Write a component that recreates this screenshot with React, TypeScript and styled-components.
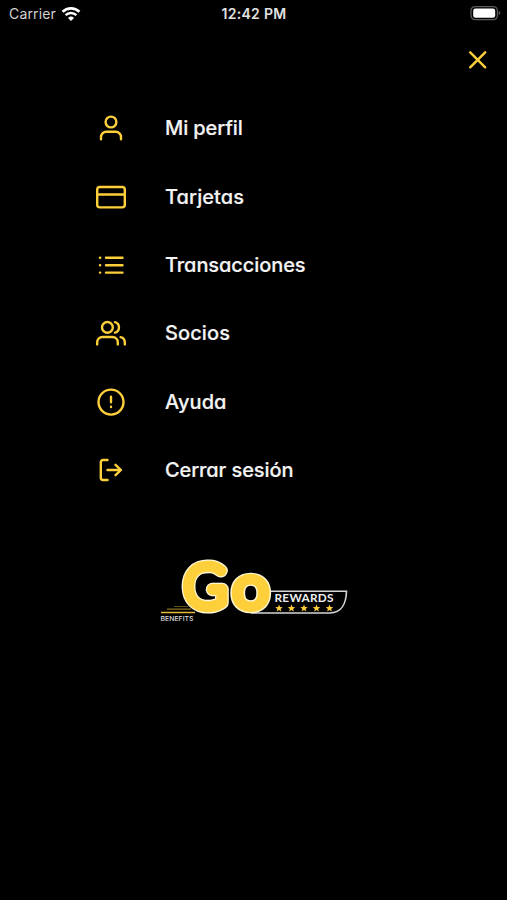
import React from "react";
import styled, { createGlobalStyle } from "styled-components";

const GlobalStyle = createGlobalStyle`
  * { box-sizing: border-box; }
  body { margin: 0; background: #000; }
`;

const yellow = "#fdcf3b";

const Screen = styled.div`
  display: flex;
  flex-direction: column;
  width: 507px;
  height: 900px;
  overflow: hidden;
  background: #000;
  color: #f4f4f4;
  font-family: Inter, "Liberation Sans", sans-serif;
`;

const StatusBar = styled.header`
  display: grid;
  grid-template-columns: 1fr auto 1fr;
  align-items: center;
  height: 28px;
  padding: 0 6px 0 9px;
`;

const Carrier = styled.div`
  display: flex;
  align-items: center;
  gap: 5px;
  margin-top: -1px;
  font-size: 14px;
  letter-spacing: 0.15px;
  color: #d2d2d2;
`;

const Clock = styled.time`
  margin: -2px 0 0 -2px;
  font-size: 14px;
  font-weight: 600;
  letter-spacing: 0.3px;
  color: #e2e2e2;
`;

const BatterySlot = styled.div`
  display: flex;
  justify-content: flex-end;
  margin-top: -2px;
`;

const TopBar = styled.div`
  display: flex;
  justify-content: flex-end;
  height: 66px;
  padding: 20px 17px 0 0;
`;

const CloseButton = styled.button`
  display: block;
  width: 24px;
  height: 24px;
  padding: 0;
  border: 0;
  background: none;
`;

const Menu = styled.nav`
  display: flex;
  flex-direction: column;
  padding-left: 93px;
`;

const MenuItem = styled.a`
  display: flex;
  align-items: center;
  gap: 36px;
  height: 68.4px;
`;

const Label = styled.span<{ $spacing: number }>`
  font-size: 20px;
  font-weight: 500;
  line-height: 28px;
  white-space: nowrap;
  letter-spacing: ${(p) => p.$spacing}px;
  font-feature-settings: "cv11" 1;
  -webkit-text-stroke: 0.2px currentColor;
`;

const LineIcon = styled.svg`
  display: block;
  flex: none;
  fill: none;
  stroke: ${yellow};
  stroke-width: 2.4;
  stroke-linecap: round;
  stroke-linejoin: round;
`;

const LogoRow = styled.footer`
  display: flex;
  padding: 46px 0 0 155px;
`;

const items = [
  {
    label: "Mi perfil",
    spacing: -0.1,
    icon: (
      <>
        <circle cx="18" cy="12" r="5.4" />
        <path d="M8 29.2v-2.2a5.2 5.2 0 0 1 5.2-5.2h9.6a5.2 5.2 0 0 1 5.2 5.2v2.2" />
      </>
    ),
  },
  {
    label: "Tarjetas",
    spacing: 0.08,
    icon: (
      <>
        <rect x="4.2" y="8" width="27.6" height="20.4" rx="2.6" />
        <path d="M4.2 15.5h27.6" />
      </>
    ),
  },
  {
    label: "Transacciones",
    spacing: -0.08,
    icon: <path d="M13 10.8h16.5M13 18.2h16.5M13 25.6h16.5M7 10.8h.2M7 18.2h.2M7 25.6h.2" />,
  },
  {
    label: "Socios",
    spacing: 0.1,
    icon: (
      <>
        <circle cx="14.4" cy="12.4" r="5.4" />
        <path d="M4.2 29.4v-2.2a5.2 5.2 0 0 1 5.2-5.2h10.2a5.2 5.2 0 0 1 5.2 5.2v2.2M22 7.2a5.4 5.4 0 0 1 0 10.4M31.8 29.4v-2.2a5.4 5.4 0 0 0-4.2-5.1" />
      </>
    ),
  },
  {
    label: "Ayuda",
    spacing: 0.1,
    icon: (
      <>
        <circle cx="18" cy="18.1" r="12.5" />
        <path d="M18 12.8v5.5M18 22.8v.2" />
      </>
    ),
  },
  {
    label: "Cerrar sesión",
    spacing: -0.1,
    icon: <path d="M14.5 8H10a2.2 2.2 0 0 0-2.2 2.2v15.6A2.2 2.2 0 0 0 10 28h4.5M14.5 18h13.3M22.5 12.8l5.5 5.2-5.5 5.2" />,
  },
];

function Wifi() {
  return (
    <svg width="20" height="16" viewBox="0 0 20 16" fill="none" stroke="#fff">
      <path d="M1.6 5.8a12 12 0 0 1 16.8 0" strokeWidth="2.7" />
      <path d="M4.6 9.2a7.8 7.8 0 0 1 10.8 0" strokeWidth="2.4" />
      <path d="M10 15 7 12a4.3 4.3 0 0 1 6 0Z" fill="#fff" stroke="none" />
    </svg>
  );
}

function Battery() {
  return (
    <svg width="31" height="16" viewBox="0 0 31 16">
      <rect x="1" y="1.6" width="26.4" height="13" rx="4" fill="#000" stroke="#5b5b5d" strokeWidth="1.3" />
      <rect x="3.2" y="3.6" width="22" height="9.2" rx="2.2" fill="#fff" />
      <path d="M28.7 6.1v4c2.2-.8 2.2-3.2 0-4Z" fill="#5b5b5d" />
    </svg>
  );
}

const LogoLetter = styled.text`
  font-family: Lato, sans-serif;
  font-weight: 100;
  stroke-linejoin: round;
  stroke-linecap: round;
`;

const starXs = [124, 136.5, 149, 161.5, 174.5];

function Logo() {
  return (
    <svg width="200" height="80" viewBox="0 0 200 80" aria-label="Go Rewards Benefits">
      <path
        d="M108 41.3h83.5c-.3 12-5 21.7-16.5 21.7H96"
        fill="none"
        stroke="#d5d5d5"
        strokeWidth="1.6"
      />
      <g stroke={yellow}>
        <path d="M19 56.5h14" strokeWidth=".6" opacity=".65" />
        <path d="M12 59.1h24" strokeWidth=".9" opacity=".75" />
        <path d="M6 62.4h34" strokeWidth="1.5" opacity=".9" />
      </g>
      {[
        { outline: 2.6, color: "#fff6d2" },
        { outline: 0, color: yellow },
      ].map(({ outline, color }) => (
        <g key={color} fill="none" stroke={color}>
          <LogoLetter transform="translate(29.3 56.9)" fontSize="57" strokeWidth={10.5 + outline}>
            G
          </LogoLetter>
          <LogoLetter transform="translate(78.6 57) scale(1.16 1.04)" fontSize="54" strokeWidth={9.5 + outline}>
            o
          </LogoLetter>
        </g>
      ))}
      <text x="119.5" y="52.3" fill="#eee" fontFamily="Lato, sans-serif" fontSize="11.8" fontWeight="700" textLength="59" lengthAdjust="spacing">
        REWARDS
      </text>
      <text x="5.5" y="71" fill="#dcdcdc" fontFamily="Inter, sans-serif" fontSize="6.6" fontWeight="500" textLength="33" lengthAdjust="spacingAndGlyphs">
        BENEFITS
      </text>
      {starXs.map((x) => (
        <path
          key={x}
          transform={`translate(${x} 58.3)`}
          fill={yellow}
          d="m0-3.8 1 2.6 2.8.1-2.2 1.7.8 2.7L0 1.8l-2.4 1.5.8-2.7-2.2-1.7 2.8-.1Z"
        />
      ))}
    </svg>
  );
}

export default function App() {
  return (
    <>
      <GlobalStyle />
      <Screen>
        <StatusBar>
          <Carrier>
            Carrier <Wifi />
          </Carrier>
          <Clock>12:42 PM</Clock>
          <BatterySlot>
            <Battery />
          </BatterySlot>
        </StatusBar>
        <TopBar>
          <CloseButton aria-label="Cerrar">
            <LineIcon width="24" height="24" viewBox="0 0 24 24">
              <path d="m4.2 4.3 15 15m0-15-15 15" />
            </LineIcon>
          </CloseButton>
        </TopBar>
        <Menu>
          {items.map((item) => (
            <MenuItem key={item.label}>
              <LineIcon width="36" height="36" viewBox="0 0 36 36">
                {item.icon}
              </LineIcon>
              <Label $spacing={item.spacing}>{item.label}</Label>
            </MenuItem>
          ))}
        </Menu>
        <LogoRow>
          <Logo />
        </LogoRow>
      </Screen>
    </>
  );
}
